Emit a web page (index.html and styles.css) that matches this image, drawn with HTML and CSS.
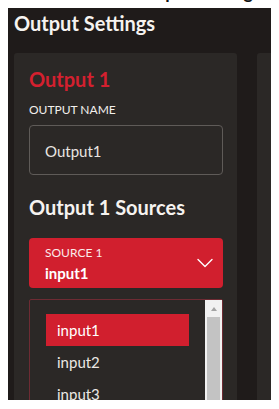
FILE: index.html
```html
<!DOCTYPE html>
<html lang="en">
<head>
<meta charset="utf-8">
<title>Output Settings</title>
<link rel="stylesheet" href="styles.css">
</head>
<body>
<div class="top-strip"><span class="top-title">Output Settings</span></div>
<div class="app">
  <h1 class="page-title">Output Settings</h1>
  <div class="cards">
    <section class="card">
      <h2 class="card-title">Output 1</h2>
      <div class="field-label">OUTPUT NAME</div>
      <div class="text-input">Output1</div>
      <h2 class="section-title">Output 1 Sources</h2>
      <div class="select">
        <div class="select-text">
          <div class="select-label">SOURCE 1</div>
          <div class="select-value">input1</div>
        </div>
        <svg class="chevron" width="16" height="10" viewBox="0 0 16 10"><path d="M1 1.5 L8 8.5 L15 1.5" fill="none" stroke="#ffffff" stroke-width="1.4" stroke-linecap="round" stroke-linejoin="round"/></svg>
      </div>
      <div class="listbox">
        <ul class="options">
          <li class="option selected">input1</li>
          <li class="option">input2</li>
          <li class="option">input3</li>
        </ul>
        <div class="scrollbar">
          <div class="scroll-btn"><span class="scroll-arrow"></span></div>
          <div class="scroll-thumb"></div>
        </div>
      </div>
    </section>
    <section class="card card-next"></section>
  </div>
</div>
</body>
</html>
```
FILE: styles.css
```css
html, body {
  margin: 0;
  padding: 0;
  background: #ffffff;
  font-family: Lato, "Noto Sans", sans-serif;
}
.top-strip {
  height: 8px;
  overflow: hidden;
  padding-left: 134px;
}
.top-title {
  display: block;
  font-size: 18px;
  font-weight: 700;
  line-height: 22px;
  color: #111111;
  margin-top: -19px;
}
.app {
  margin: 0 8px;
  height: 392px;
  background: #1f1b1a;
  overflow: hidden;
  padding: 3px 0 0 6px;
  box-sizing: border-box;
}
.page-title {
  margin: 0;
  font-size: 20px;
  line-height: 24px;
  font-weight: 700;
  color: #f6f3f0;
}
.cards {
  display: flex;
  gap: 20px;
  margin-top: 18px;
}
.card {
  flex: 0 0 223px;
  box-sizing: border-box;
  height: 400px;
  background: #2b2826;
  border-radius: 3px;
  padding: 14px 14px 0 15px;
}
.card-next {
  flex: 0 0 223px;
}
.card-title {
  margin: 0;
  font-size: 20px;
  line-height: 24px;
  font-weight: 700;
  color: #d4202f;
}
.field-label {
  margin-top: 11px;
  font-size: 12px;
  line-height: 16px;
  color: #f2efec;
}
.text-input {
  margin-top: 7px;
  height: 50px;
  box-sizing: border-box;
  border: 1px solid #5f5b58;
  border-radius: 4px;
  display: flex;
  align-items: center;
  padding: 2px 0 0 15px;
  font-size: 15px;
  line-height: 18px;
  color: #e9e5e1;
}
.section-title {
  margin: 20px 0 0;
  font-size: 20px;
  line-height: 24px;
  font-weight: 700;
  color: #f6f3f0;
}
.select {
  margin-top: 19px;
  height: 50px;
  box-sizing: border-box;
  background: #d11f2e;
  border-radius: 4px;
  display: flex;
  align-items: center;
  justify-content: space-between;
  padding: 0 10px 0 16px;
}
.select-text {
  display: flex;
  flex-direction: column;
  gap: 3px;
}
.select-label {
  font-size: 12px;
  line-height: 16px;
  color: #fbeaea;
}
.select-value {
  font-size: 15px;
  line-height: 18px;
  font-weight: 700;
  color: #ffffff;
}
.chevron {
  display: block;
}
.listbox {
  margin-top: 11px;
  height: 140px;
  box-sizing: border-box;
  border: 1px solid #6e2b33;
  border-radius: 2px;
  display: flex;
}
.options {
  list-style: none;
  margin: 0;
  padding: 14px 16px 0;
  flex: 1;
  min-width: 0;
}
.option {
  height: 32px;
  line-height: 32px;
  padding-left: 11px;
  font-size: 15px;
  color: #ece8e4;
}
.option.selected {
  background: #d11f2e;
  color: #ffffff;
}
.scrollbar {
  flex: 0 0 17px;
  box-sizing: border-box;
  background: #f1f1f1;
  padding: 0 2px;
  display: flex;
  flex-direction: column;
}
.scroll-btn {
  height: 17px;
  display: flex;
  align-items: center;
  justify-content: center;
}
.scroll-arrow {
  width: 0;
  height: 0;
  border-left: 3.5px solid transparent;
  border-right: 3.5px solid transparent;
  border-bottom: 4px solid #a3a3a3;
}
.scroll-thumb {
  flex: 1;
  background: #c3c3c3;
}
```
